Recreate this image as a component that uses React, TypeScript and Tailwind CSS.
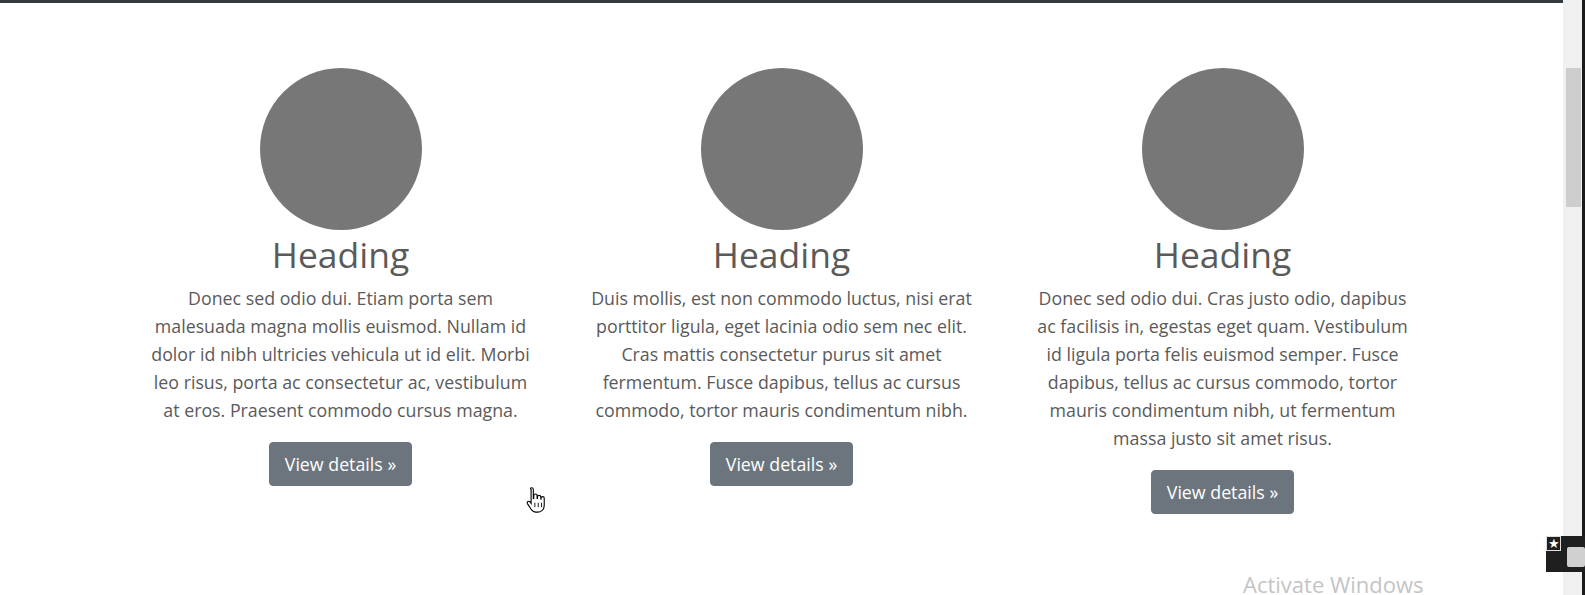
import { useState } from "react";

interface IFeature {
  id: number;
  text: string;
}

const features: IFeature[] = [
  {
    id: 1,
    text: "Donec sed odio dui. Etiam porta sem malesuada magna mollis euismod. Nullam id dolor id nibh ultricies vehicula ut id elit. Morbi leo risus, porta ac consectetur ac, vestibulum at eros. Praesent commodo cursus magna.",
  },
  {
    id: 2,
    text: "Duis mollis, est non commodo luctus, nisi erat porttitor ligula, eget lacinia odio sem nec elit. Cras mattis consectetur purus sit amet fermentum. Fusce dapibus, tellus ac cursus commodo, tortor mauris condimentum nibh.",
  },
  {
    id: 3,
    text: "Donec sed odio dui. Cras justo odio, dapibus ac facilisis in, egestas eget quam. Vestibulum id ligula porta felis euismod semper. Fusce dapibus, tellus ac cursus commodo, tortor mauris condimentum nibh, ut fermentum massa justo sit amet risus.",
  },
];

const FeatureCol = ({ feature }: { feature: IFeature }) => {
  return (
    <div className="flex flex-col items-center px-[28px] text-center">
      <div className="h-[162px] w-[162px] rounded-full bg-[#777777]" />
      <h2 className="mb-[8px] mt-[2px] text-[35.5px] font-normal leading-[44px] text-[#5a5a5a]">
        Heading
      </h2>
      <p className="mb-[18px] text-[17.8px] leading-[28px] text-[#5a5a5a]">
        {feature.text}
      </p>
      <a
        href="#"
        className="rounded-[4px] border border-[#6c757d] bg-[#6c757d] px-[15px] py-[7px] text-[17.8px] leading-[28px] text-white"
      >
        View details &raquo;
      </a>
    </div>
  );
};

const HandCursor = () => (
  <svg width="20" height="29" viewBox="0 0 18 26" className="absolute left-[526px] top-[486px]">
    <path
      d="M5 1.5c1 0 1.6.7 1.6 1.6v8.2l.4-.1V8.6c0-.9.7-1.5 1.5-1.5s1.5.6 1.5 1.5v2.6h.3V9.8c0-.9.7-1.4 1.5-1.4s1.5.6 1.5 1.4v1.8h.3v-.8c0-.8.7-1.3 1.4-1.3s1.4.5 1.4 1.3v6.4c0 3.2-2 6.3-5.6 6.3H9c-2.2 0-3.4-1-4.6-2.8l-3.1-4.9c-.4-.7-.2-1.5.5-1.9.7-.4 1.4-.2 1.9.4l.9 1.3V3.1C3.5 2.2 4.1 1.5 5 1.5z"
      fill="#fff"
      stroke="#000"
      strokeWidth="1"
    />
    <path d="M8 15v4M11 15v4M14 15v4" stroke="#000" strokeWidth="0.8" />
  </svg>
);

const App = () => {
  const [items] = useState(features);

  return (
    <div
      className="relative flex h-[595px] w-[1585px] overflow-hidden bg-white"
      style={{ fontFamily: '"Open Sans", "Noto Sans", "Liberation Sans", sans-serif' }}
    >
      <div className="flex flex-1 flex-col">
        <div className="h-[3px] bg-[#343a40]" />
        <div className="mx-auto mt-[65px] grid w-[1323px] grid-cols-3 items-start">
          {items.map((f) => (
            <FeatureCol key={f.id} feature={f} />
          ))}
        </div>
      </div>

      {/* scrollbar */}
      <div className="flex w-[22px]">
        <div className="flex-1 bg-[#f0f0f0] pl-[3px] pt-[68px]">
          <div className="h-[139px] w-[15px] bg-[#cdcdcd]" />
        </div>
        <div className="w-[3px] bg-[#1a1a1a]" />
      </div>

      {/* overlays */}
      <HandCursor />
      <div className="absolute left-[1243px] top-[574px] text-[22px] leading-[20px] text-[#c4c4c4]">
        Activate Windows
      </div>
      <div className="absolute left-[1546px] top-[536px] flex h-[36px] w-[39px] items-center gap-[6px] bg-[#1f1f1f]">
        <div className="flex h-[15px] w-[15px] items-center justify-center self-start border border-[#ddd] text-[13px] leading-none text-white">
          ★
        </div>
        <div className="mt-[6px] h-[20px] w-[18px] rounded-[2px] bg-[#d0d0d0]" />
      </div>
    </div>
  );
};

export default App;
